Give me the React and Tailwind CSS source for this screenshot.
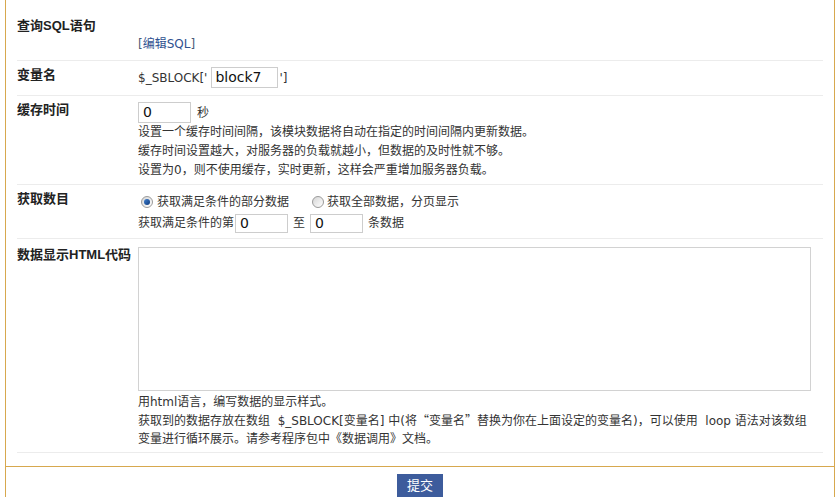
import React from "react";

const FONT = { fontFamily: '"Liberation Sans", "Noto Sans CJK SC", sans-serif' };
const BODY_FONT = { fontFamily: '"DejaVu Sans", "Noto Sans CJK SC", sans-serif' };
const CJK = { fontFamily: '"Noto Sans CJK SC", sans-serif' };
const INPUT_FONT = { fontFamily: '"DejaVu Sans", "Liberation Sans", sans-serif' };

function Radio({ checked }) {
  return (
    <span className="inline-flex items-center justify-center w-[12px] h-[12px] rounded-full border border-[#9a9a9a] bg-gradient-to-br from-[#d6d6d6] to-[#ffffff] shrink-0">
      {checked ? (
        <span className="block w-[6px] h-[6px] rounded-full bg-gradient-to-br from-[#3f7fd0] to-[#0e3c7e]" />
      ) : null}
    </span>
  );
}

function Row({ label, className, children }) {
  return (
    <div className={"flex border-b border-[#ececec] " + className}>
      <div className="w-[121px] shrink-0 text-[13px] font-bold leading-[16px] text-[#222]">{label}</div>
      <div className="flex-1 min-w-0 text-[12px] text-[#333]" style={BODY_FONT}>
        {children}
      </div>
    </div>
  );
}

export default function App() {
  return (
    <div className="w-[838px] h-[497px] bg-white overflow-hidden" style={FONT}>
      <div className="ml-[5px] w-[830px] h-full border-x border-[#d7a84e] flex flex-col">
        <div className="px-[11px] pb-[13px] border-b border-[#d7a84e]">
          <Row label="查询SQL语句" className="pt-[18px] pb-[8px]">
            <div className="h-[18px]" />
            <div className="leading-[16px]">
              <span className="text-[#4a5a78]">[</span>
              <span className="text-[#2f5190]">编辑SQL</span>
              <span className="text-[#4a5a78]">]</span>
            </div>
          </Row>

          <Row label="变量名" className="pt-[6px] pb-[7px]">
            <div className="flex items-center h-[21px]">
              <span>$_SBLOCK['</span>
              <input
                readOnly
                defaultValue="block7"
                className="ml-[4px] w-[67px] h-[21px] border border-[#cdcdcd] px-[3px] text-[14px] text-[#111] outline-none"
                style={INPUT_FONT}
              />
              <span className="ml-[1px]">']</span>
            </div>
          </Row>

          <Row label="缓存时间" className="pt-[6px] pb-[4px]">
            <div className="flex items-center h-[21px]">
              <input
                readOnly
                defaultValue="0"
                className="w-[53px] h-[21px] border border-[#cdcdcd] px-[4px] text-[14px] text-[#111] outline-none"
                style={INPUT_FONT}
              />
              <span className="ml-[6px]">秒</span>
            </div>
            <div className="leading-[19px]">
              <div>设置一个缓存时间间隔，该模块数据将自动在指定的时间间隔内更新数据。</div>
              <div>缓存时间设置越大，对服务器的负载就越小，但数据的及时性就不够。</div>
              <div>设置为0，则不使用缓存，实时更新，这样会严重增加服务器负载。</div>
            </div>
          </Row>

          <Row label="获取数目" className="pt-[6px] pb-[5px]">
            <div className="flex items-center h-[22px]">
              <span className="ml-[3px] mr-[4px] inline-flex">
                <Radio checked />
              </span>
              <span>获取满足条件的部分数据</span>
              <span className="ml-[23px] mr-[3px] inline-flex">
                <Radio />
              </span>
              <span>获取全部数据，分页显示</span>
            </div>
            <div className="flex items-center h-[20px]">
              <span>获取满足条件的第</span>
              <input
                readOnly
                defaultValue="0"
                className="ml-[1px] w-[53px] h-[19px] border border-[#cdcdcd] px-[4px] text-[14px] text-[#111] outline-none"
                style={INPUT_FONT}
              />
              <span className="mx-[5px]">至</span>
              <input
                readOnly
                defaultValue="0"
                className="w-[53px] h-[19px] border border-[#cdcdcd] px-[4px] text-[14px] text-[#111] outline-none"
                style={INPUT_FONT}
              />
              <span className="ml-[5px]">条数据</span>
            </div>
          </Row>

          <Row label="数据显示HTML代码" className="pt-[8px] pb-[4px]">
            <textarea
              readOnly
              className="block w-[673px] h-[144px] border border-[#d2d2d2] resize-none outline-none"
            />
            <div className="mt-[2px] leading-[18px] whitespace-nowrap">
              <div>用html语言，编写数据的显示样式。</div>
              <div>
                获取到的数据存放在数组&nbsp;&nbsp;$_SBLOCK[变量名] 中(将
                <span style={CJK}>“</span>变量名<span style={CJK}>”</span>
                替换为你在上面设定的变量名)，可以使用&nbsp;&nbsp;loop 语法对该数组
              </div>
              <div>变量进行循环展示。请参考程序包中《数据调用》文档。</div>
            </div>
          </Row>
        </div>

        <div className="flex justify-center pt-[7px]">
          <button className="w-[46px] h-[23px] bg-[#3d5c9c] text-white text-[13px] leading-[23px]">提交</button>
        </div>
      </div>
    </div>
  );
}
